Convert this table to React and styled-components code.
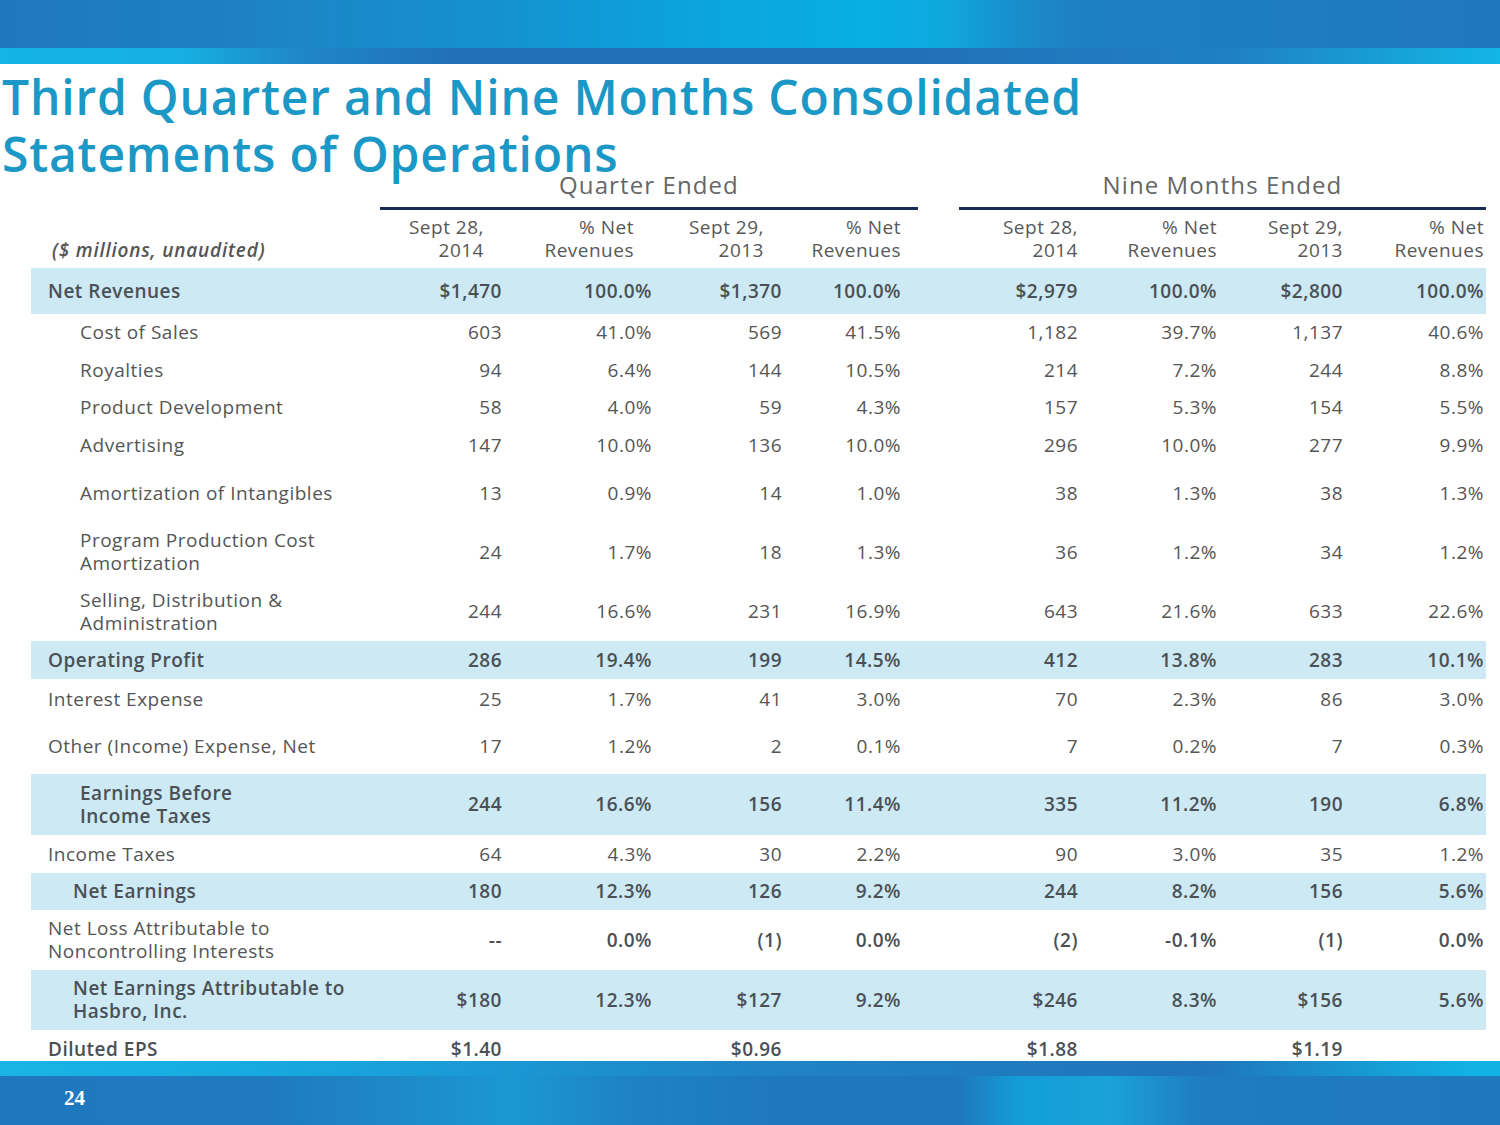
import React from "react";
import styled, { createGlobalStyle } from "styled-components";

const GlobalStyle = createGlobalStyle`
  html, body { margin: 0; padding: 0; background: #ffffff; }
  body { font-family: "Open Sans", "Liberation Sans", sans-serif; }
`;

const COLS = "349px 122px 150px 130px 136px 41px 119px 139px 126px 143px";

const Slide = styled.div`
  width: 1500px;
  height: 1125px;
  display: flex;
  flex-direction: column;
  overflow: hidden;
  background: #fff;
`;

const Band = styled.div`
  display: flex;
  flex-direction: column;
  flex: none;
`;

const BandMain = styled.div`
  height: ${(p) => p.$h}px;
  background: linear-gradient(90deg, #1f78bf 0%, #1e80c3 15%, #1b86c8 20%, #1590cf 32%, #0aa6dc 48%, #08afe2 58%, #0ea8dd 63%, #1a8ccc 68%, #1e80c4 72%, #1f78be 100%);
  display: flex;
  align-items: center;
`;

const BandMainBottom = styled(BandMain)`
  background: linear-gradient(90deg, #1f78bf 0%, #1f7ac0 18%, #1e88c8 26%, #1a98d4 34%, #1e82c4 42%, #1f78bf 52%, #1f78bf 64%, #139ed8 68%, #1aa2d9 74%, #1f7cc0 80%, #1f78be 100%);
`;

const BandStripe = styled.div`
  height: ${(p) => p.$h}px;
  background: ${(p) =>
    p.$bottom
      ? "linear-gradient(90deg, #1ab4e6 0%, #16ace2 15%, #1a9bd7 30%, #1e84c6 50%, #2074bb 80%, #11b2e4 98%)"
      : "linear-gradient(90deg, #14b4e6 0%, #16b0e3 12%, #1f86c8 20%, #2271b8 30%, #2270b7 60%, #1f80c4 82%, #12b6e6 100%)"};
`;

const PageNumber = styled.span`
  font-family: "Liberation Serif", "DejaVu Serif", serif;
  font-weight: 700;
  font-size: 21px;
  color: #ffffff;
  padding-left: 64px;
  margin-top: -6px;
`;

const Title = styled.h1`
  margin: 0 0 -10px 0;
  padding: 4px 0 0 2px;
  font-family: "Open Sans", "Liberation Sans", sans-serif;
  font-weight: 600;
  font-size: 48px;
  line-height: 57px;
  color: #1b98c6;
  letter-spacing: 0.8px;
  position: relative;
  z-index: 1;
`;

const Table = styled.div`
  margin-left: 31px;
  width: 1455px;
  display: flex;
  flex-direction: column;
  flex: none;
`;

const Row = styled.div`
  display: grid;
  grid-template-columns: ${COLS};
  align-items: ${(p) => p.$align || "center"};
  height: ${(p) => p.$h}px;
  box-sizing: border-box;
  padding-top: ${(p) => p.$pt || 0}px;
  background: ${(p) => (p.$hl ? "#cce9f4" : "transparent")};
  font-size: 19px;
  letter-spacing: 0.5px;
`;

const GroupHead = styled.div`
  grid-column: ${(p) => p.$col};
  align-self: stretch;
  display: flex;
  align-items: flex-end;
  justify-content: center;
  padding-bottom: 10px;
  border-bottom: 3px solid #1b2a55;
  font-size: 24px;
  font-weight: 500;
  line-height: 24px;
  color: #666;
  letter-spacing: 1.1px;
`;

const ColHead = styled.div`
  grid-column: ${(p) => p.$col};
  text-align: right;
  padding-right: ${(p) => p.$pr}px;
  line-height: 23px;
  font-weight: 500;
  color: #585858;
`;

const UnitNote = styled.div`
  grid-column: 1;
  align-self: end;
  padding: 0 0 6px 21px;
  font-style: italic;
  font-weight: 600;
  letter-spacing: 0.8px;
  line-height: 23px;
  color: #555;
`;

const Label = styled.div`
  grid-column: 1;
  padding-left: ${(p) => p.$indent}px;
  line-height: 23px;
  font-weight: ${(p) => (p.$bold ? 600 : 400)};
  color: ${(p) => (p.$bold ? "#4a5055" : "#555")};
`;

const Value = styled.div`
  grid-column: ${(p) => p.$col};
  text-align: right;
  padding-right: ${(p) => p.$pr}px;
  line-height: 23px;
  font-weight: ${(p) => (p.$bold ? 600 : 400)};
  color: ${(p) => (p.$bold ? "#4a5055" : "#555")};
`;

const valueCols = [2, 3, 4, 5, 7, 8, 9, 10];
const valuePad = [0, 0, 0, 17, 0, 0, 0, 2];
const headPad = [18, 18, 18, 17, 0, 0, 0, 2];

const headers = [
  ["Sept 28,", "2014"],
  ["% Net", "Revenues"],
  ["Sept 29,", "2013"],
  ["% Net", "Revenues"],
  ["Sept 28,", "2014"],
  ["% Net", "Revenues"],
  ["Sept 29,", "2013"],
  ["% Net", "Revenues"],
];

const rows = [
  { label: ["Net Revenues"], indent: 17, bold: true, hl: true, h: 46,
    v: ["$1,470", "100.0%", "$1,370", "100.0%", "$2,979", "100.0%", "$2,800", "100.0%"] },
  { label: ["Cost of Sales"], indent: 49, h: 37,
    v: ["603", "41.0%", "569", "41.5%", "1,182", "39.7%", "1,137", "40.6%"] },
  { label: ["Royalties"], indent: 49, h: 38,
    v: ["94", "6.4%", "144", "10.5%", "214", "7.2%", "244", "8.8%"] },
  { label: ["Product Development"], indent: 49, h: 37,
    v: ["58", "4.0%", "59", "4.3%", "157", "5.3%", "154", "5.5%"] },
  { label: ["Advertising"], indent: 49, h: 38,
    v: ["147", "10.0%", "136", "10.0%", "296", "10.0%", "277", "9.9%"] },
  { label: ["Amortization of Intangibles"], indent: 49, h: 58,
    v: ["13", "0.9%", "14", "1.0%", "38", "1.3%", "38", "1.3%"] },
  { label: ["Program Production Cost", "Amortization"], indent: 49, h: 60,
    v: ["24", "1.7%", "18", "1.3%", "36", "1.2%", "34", "1.2%"] },
  { label: ["Selling, Distribution &", "Administration"], indent: 49, h: 59,
    v: ["244", "16.6%", "231", "16.9%", "643", "21.6%", "633", "22.6%"] },
  { label: ["Operating Profit"], indent: 17, bold: true, hl: true, h: 38,
    v: ["286", "19.4%", "199", "14.5%", "412", "13.8%", "283", "10.1%"] },
  { label: ["Interest Expense"], indent: 17, h: 40,
    v: ["25", "1.7%", "41", "3.0%", "70", "2.3%", "86", "3.0%"] },
  { label: ["Other (Income) Expense, Net"], indent: 17, h: 55,
    v: ["17", "1.2%", "2", "0.1%", "7", "0.2%", "7", "0.3%"] },
  { label: ["Earnings Before", "Income Taxes"], indent: 49, bold: true, hl: true, h: 61,
    v: ["244", "16.6%", "156", "11.4%", "335", "11.2%", "190", "6.8%"] },
  { label: ["Income Taxes"], indent: 17, h: 38,
    v: ["64", "4.3%", "30", "2.2%", "90", "3.0%", "35", "1.2%"] },
  { label: ["Net Earnings"], indent: 42, bold: true, hl: true, h: 37,
    v: ["180", "12.3%", "126", "9.2%", "244", "8.2%", "156", "5.6%"] },
  { label: ["Net Loss Attributable to", "Noncontrolling Interests"], indent: 17, h: 60, boldValues: true,
    v: ["--", "0.0%", "(1)", "0.0%", "(2)", "-0.1%", "(1)", "0.0%"] },
  { label: ["Net Earnings Attributable to", "Hasbro, Inc."], indent: 42, bold: true, hl: true, h: 60,
    v: ["$180", "12.3%", "$127", "9.2%", "$246", "8.3%", "$156", "5.6%"] },
  { label: ["Diluted EPS"], indent: 17, bold: true, h: 31, pt: 8, align: "start",
    v: ["$1.40", "", "$0.96", "", "$1.88", "", "$1.19", ""] },
];

const Spacer = styled.div`
  flex: 1;
`;

export default function App() {
  return (
    <Slide>
      <GlobalStyle />
      <Band>
        <BandMain $h={48} />
        <BandStripe $h={16} />
      </Band>
      <Title>
        Third Quarter and Nine Months Consolidated
        <br />
        Statements of Operations
      </Title>
      <Table>
        <Row $h={38}>
          <GroupHead $col="2 / 6">Quarter Ended</GroupHead>
          <GroupHead $col="7 / 11">Nine Months Ended</GroupHead>
        </Row>
        <Row $h={58}>
          <UnitNote>($ millions, unaudited)</UnitNote>
          {headers.map((h, i) => (
            <ColHead key={i} $col={valueCols[i]} $pr={headPad[i]}>
              {h[0]}
              <br />
              {h[1]}
            </ColHead>
          ))}
        </Row>
        {rows.map((r, ri) => (
          <Row key={ri} $h={r.h} $hl={r.hl} $pt={r.pt} $align={r.align}>
            <Label $indent={r.indent} $bold={r.bold}>
              {r.label.map((l, li) => (
                <React.Fragment key={li}>
                  {li > 0 && <br />}
                  {l}
                </React.Fragment>
              ))}
            </Label>
            {r.v.map((val, vi) => (
              <Value
                key={vi}
                $col={valueCols[vi]}
                $pr={valuePad[vi]}
                $bold={r.bold || r.boldValues}
              >
                {val}
              </Value>
            ))}
          </Row>
        ))}
      </Table>
      <Spacer />
      <Band>
        <BandStripe $h={15} $bottom />
        <BandMainBottom $h={50}>
          <PageNumber>24</PageNumber>
        </BandMainBottom>
      </Band>
    </Slide>
  );
}
